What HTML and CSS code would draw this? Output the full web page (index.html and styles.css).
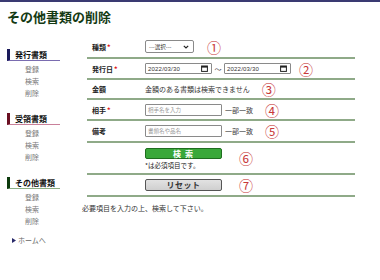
FILE: index.html
```html
<!DOCTYPE html>
<html lang="ja">
<head>
<meta charset="utf-8">
<link rel="stylesheet" href="styles.css">
</head>
<body>
<div class="page">
  <h1 class="title">その他書類の削除</h1>
  <div class="layout">
    <nav class="side">
      <div class="group g1">
        <div class="ghead">発行書類</div>
        <ul class="items"><li>登録</li><li>検索</li><li>削除</li></ul>
      </div>
      <div class="group g2">
        <div class="ghead">受領書類</div>
        <ul class="items"><li>登録</li><li>検索</li><li>削除</li></ul>
      </div>
      <div class="group g3">
        <div class="ghead">その他書類</div>
        <ul class="items"><li>登録</li><li>検索</li><li>削除</li></ul>
      </div>
      <div class="home"><svg class="tri" width="4" height="5" viewBox="0 0 4 5"><polygon points="0,0 4,2.5 0,5" fill="#2a2a6a"/></svg>ホームへ</div>
    </nav>
    <main class="main">
      <div class="form">
        <div class="row r1">
          <div class="label">種類<span class="req">*</span></div>
          <div class="field">
            <div class="select"><span>---選択---</span><svg width="6" height="4" viewBox="0 0 6 4"><polyline points="0.8,0.8 3,3 5.2,0.8" fill="none" stroke="#222" stroke-width="1.2"/></svg></div>
            <span class="num n1">①</span>
          </div>
        </div>
        <div class="row r2">
          <div class="label">発行日<span class="req">*</span></div>
          <div class="field">
            <div class="date"><span>2022/03/30</span><svg width="7" height="7" viewBox="0 0 7 7"><rect x="0.6" y="1" width="5.8" height="5.4" fill="none" stroke="#222" stroke-width="1"/><rect x="0.6" y="1" width="5.8" height="1.6" fill="#222"/></svg></div>
            <span class="tilde">〜</span>
            <div class="date"><span>2022/03/30</span><svg width="7" height="7" viewBox="0 0 7 7"><rect x="0.6" y="1" width="5.8" height="5.4" fill="none" stroke="#222" stroke-width="1"/><rect x="0.6" y="1" width="5.8" height="1.6" fill="#222"/></svg></div>
            <span class="num n2">②</span>
          </div>
        </div>
        <div class="row r3">
          <div class="label">金額</div>
          <div class="field">
            <span class="text">金額のある書類は検索できません</span>
            <span class="num n3">③</span>
          </div>
        </div>
        <div class="row r4">
          <div class="label">相手<span class="req">*</span></div>
          <div class="field">
            <div class="input"><span class="ph">相手名を入力</span></div>
            <span class="text match">一部一致</span>
            <span class="num n4">④</span>
          </div>
        </div>
        <div class="row r5">
          <div class="label">備考</div>
          <div class="field">
            <div class="input"><span class="ph">書類名や品名</span></div>
            <span class="text match">一部一致</span>
            <span class="num n4">⑤</span>
          </div>
        </div>
        <div class="row r6">
          <div class="label"></div>
          <div class="field">
            <div class="stack">
              <div class="btn search">検 索</div>
              <div class="note">*は必須項目です。</div>
            </div>
            <span class="num n6">⑥</span>
          </div>
        </div>
        <div class="row r7">
          <div class="label"></div>
          <div class="field">
            <div class="btn reset">リセット</div>
            <span class="num n6">⑦</span>
          </div>
        </div>
      </div>
      <p class="footer">必要項目を入力の上、検索して下さい。</p>
    </main>
  </div>
</div>
</body>
</html>
```
FILE: styles.css
```css
* { box-sizing: border-box; }
html, body { margin: 0; padding: 0; background: #fff; }
body {
  font-family: "Noto Sans CJK JP", "Liberation Sans", sans-serif;
  color: #222;
  width: 380px;
  height: 280px;
  overflow: hidden;
}
.page { border-top: 2px solid #3a3a72; }
.title {
  margin: 0;
  padding: 7px 0 0 7px;
  font-size: 13px;
  line-height: 15px;
  font-weight: bold;
  color: #143a14;
}
.layout { display: flex; align-items: flex-start; padding-left: 7px; }
.side { width: 53px; margin-top: 25px; flex: none; }
.group + .group { margin-top: 14px; }
.ghead {
  height: 12px;
  line-height: 11px;
  font-size: 8px;
  font-weight: bold;
  padding-left: 5px;
  border-left: 3px solid #1a1a5a;
  border-bottom: 1px solid #7a6cb0;
  color: #111;
}
.g2 .ghead { border-left-color: #6a1022; border-bottom-color: #c9809a; }
.g3 .ghead { border-left-color: #0c3a0c; border-bottom-color: #8cae84; }
.items { list-style: none; margin: 2px 0 0; padding: 0 0 0 18px; }
.items li { font-size: 7px; line-height: 12px; height: 12px; color: #777; }
.home {
  margin-top: 7px;
  padding-left: 5px;
  font-size: 7px;
  line-height: 12px;
  color: #666;
  display: flex;
  align-items: center;
}
.tri { margin-right: 2px; }
.main { margin-left: 22px; margin-top: 12px; flex: none; }
.form { margin-left: 5px; width: 268px; }
.row {
  display: flex;
  align-items: center;
  border-bottom: 2px solid #8faa88;
  padding-left: 5px;
}
.r1 { height: 23px; }
.r2 { height: 21px; }
.r3 { height: 20px; }
.r4 { height: 21px; }
.r5 { height: 22px; }
.r6 { height: 32px; }
.r7 { height: 22px; }
.label {
  width: 53px;
  flex: none;
  font-size: 7px;
  font-weight: bold;
  color: #222;
}
.req { color: #e01010; margin-left: 1px; }
.field { display: flex; align-items: center; }
.select {
  width: 49px;
  height: 13px;
  border: 1px solid #8a8a8a;
  border-radius: 2px;
  display: flex;
  align-items: center;
  justify-content: space-between;
  padding: 0 4px 0 3px;
  font-size: 5.5px;
  color: #333;
}
.date {
  width: 67px;
  height: 11px;
  border: 1px solid #8a8a8a;
  border-radius: 1px;
  display: flex;
  align-items: center;
  justify-content: space-between;
  padding: 0 3px 0 2px;
  font-family: "Liberation Sans", sans-serif;
  font-size: 6px;
  letter-spacing: 0.2px;
  color: #333;
}
.tilde { font-size: 7px; width: 12px; text-align: center; color: #444; }
.text { font-size: 7px; color: #333; }
.input {
  width: 77px;
  height: 12px;
  border: 1px solid #8a8a8a;
  border-radius: 1px;
  display: flex;
  align-items: center;
  padding-left: 2px;
}
.ph { font-size: 5.5px; color: #999; }
.match { margin-left: 3px; }
.num {
  font-size: 14px;
  line-height: 14px;
  color: #c83a3a;
  font-weight: normal;
}
.n1 { margin-left: 13px; }
.n2 { margin-left: 8px; }
.n3 { margin-left: 12px; }
.n4 { margin-left: 12px; }
.n6 { margin-left: 17px; }
.stack { display: flex; flex-direction: column; margin-top: 1px; }
.btn {
  width: 77px;
  text-align: center;
  font-size: 8px;
  font-weight: bold;
  border-radius: 2px;
}
.search {
  height: 11px;
  line-height: 9px;
  background: #3aa83a;
  border: 1px solid #1f6e1f;
  color: #fff;
  letter-spacing: 1px;
}
.note { font-size: 6.5px; line-height: 10px; margin-top: 1px; color: #222; }
.reset {
  height: 12px;
  line-height: 10px;
  background: linear-gradient(#e2e2e2, #cfcfcf);
  border: 1px solid #555;
  color: #333;
  letter-spacing: 0.5px;
}
.footer {
  margin: 6px 0 0;
  font-size: 7px;
  line-height: 10px;
  color: #333;
}
```
